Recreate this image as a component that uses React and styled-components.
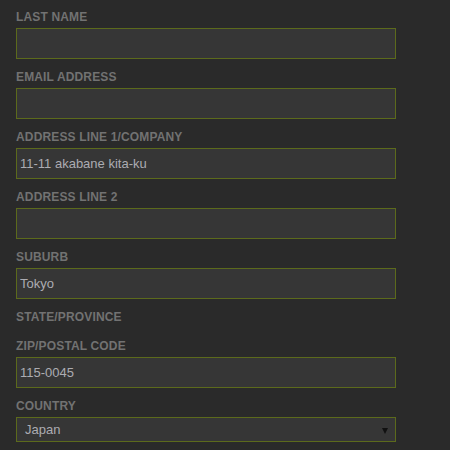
import React from 'react'
import styled, { createGlobalStyle } from 'styled-components'

const GlobalStyle = createGlobalStyle`
  html, body {
    margin: 0;
    padding: 0;
    background: #2a2a2a;
    height: 100%;
    overflow: hidden;
  }
`

const Form = styled.form`
  padding: 10px 0 0 16px;
  font-family: 'Liberation Sans', Arial, sans-serif;
`

const Field = styled.div`
  display: flex;
  flex-direction: column;
  margin-bottom: 11px;
`

const Label = styled.label`
  font-size: 12px;
  line-height: 14px;
  font-weight: 700;
  text-transform: uppercase;
  color: #727272;
  margin-bottom: 4px;
  letter-spacing: 0.15px;
`

const Input = styled.input`
  box-sizing: border-box;
  width: 380px;
  height: 31px;
  margin: 0;
  padding: 0 3px;
  background: #363636;
  border: 1px solid #5c6a1c;
  color: #acacb2;
  font-family: 'Liberation Sans', Arial, sans-serif;
  font-size: 13px;
  outline: none;
`

const SelectBox = styled.div`
  box-sizing: border-box;
  width: 380px;
  height: 25px;
  display: flex;
  align-items: center;
  justify-content: space-between;
  padding: 0 7px 0 8px;
  background: #363636;
  border: 1px solid #5c6a1c;
  color: #acacb2;
  font-size: 13px;
`

const Arrow = styled.span`
  width: 0;
  height: 0;
  border-left: 3px solid transparent;
  border-right: 3px solid transparent;
  border-top: 6px solid #111;
  margin-top: 2px;
`

const fields = [
  { label: 'Last Name', value: '' },
  { label: 'Email Address', value: '' },
  { label: 'Address Line 1/Company', value: '11-11 akabane kita-ku' },
  { label: 'Address Line 2', value: '' },
  { label: 'Suburb', value: 'Tokyo' },
  { label: 'State/Province', noInput: true },
  { label: 'Zip/Postal Code', value: '115-0045' },
]

const App = () => {
  return (
    <>
      <GlobalStyle />
      <Form>
        {fields.map((f) => (
          <Field key={f.label}>
            <Label>{f.label}</Label>
            {!f.noInput && <Input defaultValue={f.value} />}
          </Field>
        ))}
        <Field>
          <Label>Country</Label>
          <SelectBox>
            <span>Japan</span>
            <Arrow />
          </SelectBox>
        </Field>
      </Form>
    </>
  )
}

export default App
